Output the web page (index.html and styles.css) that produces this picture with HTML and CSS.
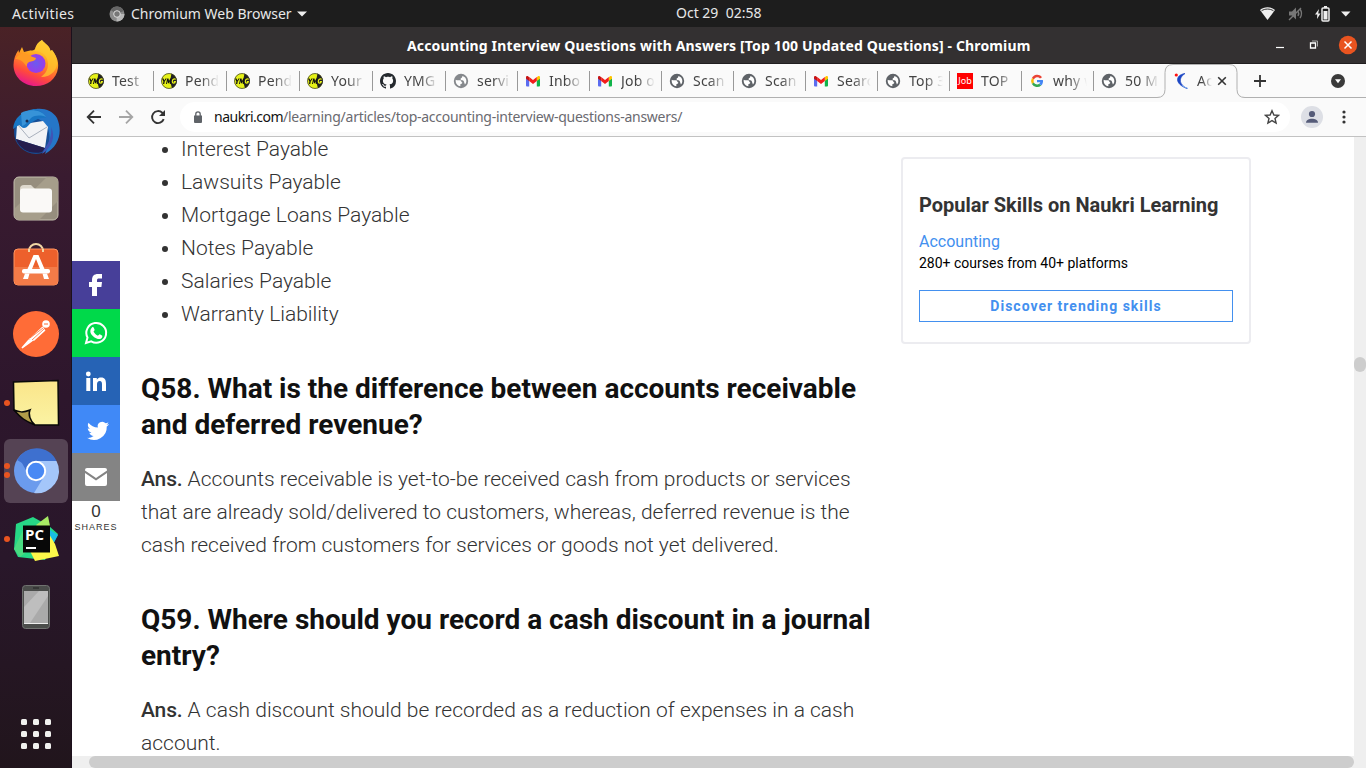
FILE: index.html
```html
<!DOCTYPE html>
<html lang="en">
<head>
<meta charset="utf-8">
<title>Accounting Interview Questions with Answers</title>
<link rel="stylesheet" href="styles.css">
</head>
<body>
<svg width="0" height="0" class="defs">
  <symbol id="ymg" viewBox="0 0 16 16"><circle cx="8" cy="8" r="7.8" fill="#e6f218"/><path d="M10.5.6A7.8 7.8 0 0 1 15 11.500A8 8 0 0 1 11 15.200L9 8z" fill="#222"/><circle cx="8" cy="8" r="7.500" fill="none" stroke="#333" stroke-width=".7"/><path d="M1 5.500h1.500l.8 2 1.200-2h1.300L3.700 8.500 3.300 11H2l.4-2.500zM6.200 5.500h1.300l.5 2.500 1.300-2.500h1.200L9.800 11H8.700l.4-3L8 10.300H7l-.5-2.500L6 11H5z" fill="#111"/><path d="M14.500 6.600c-.5-1.100-3.200-.9-3.200 1.800 0 2.400 2.700 2.200 3 .3h-1.500" fill="none" stroke="#e6f218" stroke-width="1.200"/></symbol>
  <symbol id="globe" viewBox="0 0 24 24"><circle cx="12" cy="12" r="9.500" fill="#fff"/><path fill="#5f6368" d="M12 1.200a10.800 10.800 0 1 0 0 21.600 10.800 10.800 0 0 0 0-21.600zM11 19.930c-3.950-.49-7-3.850-7-7.930 0-.62.08-1.210.21-1.790l1.500.8h4.500c1.500 0 2 1 2.300 2 .2.800 1.500.5 1.500 1.500 0 1.500-2 1.500-3 2.200zm6.900-2.540-1.900-5.390c-.7-1.500-3-.5-4-1.500-1-1.200-.5-2.500.5-3 1-.4 1.500-1.200 1.500-2.910 4 .7 6 4.060 6 7.410 0 2.080-.8 3.970-2.100 5.390z"/></symbol>
  <symbol id="gmail" viewBox="0 0 16 16"><path d="M1 5v7.500a1 1 0 0 0 1 1h2.200V7z" fill="#5b6cf0"/><path d="M15 5v7.500a1 1 0 0 1-1 1h-2.200V7z" fill="#10b34a"/><path d="M11.800 4.200 13 3.200c.8-.6 2-.1 2 1v1.500l-3.200 2.400z" fill="#ffc400"/><path d="M4.200 8.100V4L8 6.900 11.800 4v4.100L8 11z" fill="#f31c1c"/><path d="M1 5.700V4.200c0-1.100 1.200-1.600 2-1l1.200 1v3.900z" fill="#c61414"/></symbol>
  <symbol id="github" viewBox="0 0 16 16"><path fill="#24292e" d="M8 0C3.580 0 0 3.580 0 8c0 3.540 2.290 6.530 5.470 7.590.4.070.55-.17.55-.38 0-.19-.01-.82-.01-1.490-2.010.37-2.530-.49-2.690-.94-.09-.23-.48-.94-.82-1.130-.28-.15-.68-.52-.01-.53.63-.01 1.080.58 1.230.82.72 1.210 1.870.87 2.330.66.070-.52.28-.87.51-1.070-1.780-.2-3.640-.89-3.640-3.950 0-.87.31-1.590.82-2.150-.08-.2-.36-1.020.08-2.120 0 0 .67-.21 2.200.82.640-.18 1.320-.27 2-.27s1.360.09 2 .27c1.530-1.040 2.200-.82 2.200-.82.44 1.100.16 1.920.08 2.120.51.56.82 1.270.82 2.150 0 3.070-1.870 3.750-3.650 3.950.29.25.54.73.54 1.480 0 1.070-.01 1.930-.01 2.200 0 .21.15.46.55.38A8.010 8.010 0 0 0 16 8c0-4.420-3.580-8-8-8z"/></symbol>
  <symbol id="google" viewBox="0 0 16 16"><path d="M13 4.200A6 6 0 0 0 2.900 5.100L4.900 6.500A3.600 3.600 0 0 1 11 5.500z" fill="#ea4335"/><path d="M2.900 5.100a6 6 0 0 0 0 5.800l2-1.500a3.600 3.600 0 0 1 0-2.900z" fill="#fbbc05"/><path d="M2.900 10.900a6 6 0 0 0 9.300 1.500l-2-1.600a3.600 3.600 0 0 1-5.300-1.400z" fill="#34a853"/><path d="M8 6.900h5.900c.4 2.200-.2 4.200-1.700 5.500l-2-1.600c.6-.4 1-1 1.100-1.600H8z" fill="#4285f4"/></symbol>
</svg>

<header class="topbar">
  <span class="activities">Activities</span>
  <svg class="app-icon" width="16" height="16" viewBox="0 0 16 16"><circle cx="8" cy="8" r="7.500" fill="#8b8b8b"/><path d="M8 8 1.600 4A7.500 7.500 0 0 1 14.800 5z" fill="#666"/><path d="M8 8h7.500A7.500 7.500 0 0 1 7.500 15.500z" fill="#b8b8b8"/><circle cx="8" cy="8" r="3.300" fill="#777" stroke="#ddd" stroke-width="1"/></svg>
  <span class="app-name">Chromium Web Browser</span>
  <svg class="app-arrow" width="10" height="6" viewBox="0 0 10 6"><path d="M0 .5h10L5 5.500z" fill="#eee"/></svg>
  <span class="clock">Oct 29&nbsp; 02:58</span>
  <svg class="status" width="92" height="18" viewBox="0 0 92 18">
    <path d="M1 5C5 1.300 12 1.300 16 5L8.500 15z" fill="#eee"/><path d="M2.500 5.800C6 3.500 11 3.500 14.500 5.800" stroke="#1d1d1d" fill="none" stroke-width=".9"/>
    <g stroke="#777" fill="none" stroke-width="1.400"><path d="M30 6.500h3l4-4v12l-4-4h-3z" fill="#777" stroke="none"/><path d="M39 6q1.500 2.500 0 5M41 4q3 4.500 0 9M30 15 42 3"/></g>
    <path d="M60 4l-4 5.500h2.300L58 14l3.500-5.500h-2.300z" fill="#eee"/><rect x="63" y="3" width="7" height="13" rx="1" fill="none" stroke="#eee" stroke-width="1.500"/><path d="M65 1h3v2h-3zM64.500 6h4v8.500h-4z" fill="#eee"/>
    <path d="M82 6.500h9.500l-4.750 5z" fill="#eee"/>
  </svg>
</header>

<div class="desktop">
  <nav class="dock">
    <div class="app"><svg width="48" height="48" viewBox="0 0 48 48">
      <defs><linearGradient id="ff" x1=".75" y1="0" x2=".35" y2="1"><stop offset="0" stop-color="#fff04a"/><stop offset=".4" stop-color="#ffa31f"/><stop offset=".75" stop-color="#ff4a3c"/><stop offset="1" stop-color="#e6168f"/></linearGradient><radialGradient id="fp"><stop offset="0" stop-color="#6a5bef"/><stop offset="1" stop-color="#9b3be8"/></radialGradient></defs>
      <path d="M30 1c2 3 8 6 8.500 11l1.500-1c4 5 7 11 6 18-1.500 11-10.500 18-22 18C10.500 47 1.500 37 1.500 26c0-6 2-11 5-15l.5 3 3-6 2 5 4-1c3-1 6 0 7-2 1-4 3-7 7-9z" fill="url(#ff)"/>
      <path d="M30 1c-4 3-7 7-7 11 8 0 13 6 13 13 0 6-3 10-7 13 11 0 17-8 16-16-1-4-2-8-5-11l-1.500 1C38 7 32 4 30 1z" fill="#ffc52e" opacity=".75"/><circle cx="24" cy="24.500" r="9.500" fill="url(#fp)"/><path d="M3 20c5-6 8-7 14-4 3 2 5 2 7 3 0 2-2 3-5 3.500-3 .5-4 2-4.500 5C11 22 8 20 3 20z" fill="#ff9a24"/></svg></div>
    <div class="app"><svg width="48" height="48" viewBox="0 0 48 48"><circle cx="24" cy="25" r="22" fill="#174f96"/><path d="M12 9C19-1 38-1 45 11c6 14 2 28-12 36 4-9 6-17 3-25-4-9-12-13-24-13z" fill="#2576c8"/><path d="M5 18l26-4 5 6-3 21L4 32z" fill="#f2f3f5"/><path d="m6 18 11 13 18-11" fill="none" stroke="#aab1bd"/><path d="M1 22C2 11 10 4 22 2c6 1 10 4 12 9-4-1-8 0-12 3-5 2-6 7-10 7-2 0-3-2-5-3z" fill="#1876c4"/><path d="M9 6C16 2 29 2 34 10c-5-2-11-2-15 1-3 3-5 7-9 8z" fill="#3793d8"/><circle cx="15" cy="14" r="1.500" fill="#182c52"/><path d="M33 41c5-7 7-14 6-21 5 10 1 20-9 27z" fill="#4054b5"/><path d="M4 32l29 9-3 4C19 48 8 43 4 32z" fill="#251d4d"/></svg></div>
    <div class="app raised"><svg width="48" height="48" viewBox="0 0 48 48"><rect x="2" y="3" width="44" height="43" rx="5" fill="#968e7e" stroke="#c4bfae"/><path d="M3 34 35 3h7q4 0 4 4v20L27 46H8q-5 0-5-5z" fill="#a69e8b"/><path d="M8 15q0-4 4-4h7l4 4v5H8z" fill="#ddd8cd"/><rect x="8" y="14.500" width="32" height="24" rx="3" fill="#faf9f7"/></svg></div>
    <div class="app raised"><svg width="48" height="48" viewBox="0 0 48 48"><path d="M17 9a7 7 0 0 1 14 0" fill="none" stroke="#f2d7a5" stroke-width="2"/><rect x="2" y="7" width="44" height="36" rx="4" fill="#ed602c" stroke="#ff9560"/><path d="M2.500 25h43v14q0 4-4 4H7q-4 0-4-4z" fill="#f37b48"/><path d="M17 10V7M31 10V7" stroke="#f2d7a5" stroke-width="2"/><path d="m15.500 27 6-14h5l6 14h-4.500L24 17l-4 10zM13 31.500h4.500L16 37h-5zM30.500 31.500H35l2 5.500h-5z" fill="#fff"/><rect x="10" y="27" width="28" height="4.500" rx="2" fill="#fff"/></svg></div>
    <div class="app raised"><svg width="48" height="48" viewBox="0 0 48 48"><circle cx="24" cy="24" r="23" fill="#ff6c37"/><circle cx="34" cy="14" r="3.800" fill="#fff"/><path d="M31 17 18 29l4 1 11-10M17 30 10 38l7-5 4-3" fill="#fff" stroke="#fff" stroke-width="1.500"/><path d="m18 28 13-10M20 30l12-11" stroke="#ff6c37" stroke-width=".8"/><path d="M32 14h4" stroke="#ff6c37"/></svg></div>
    <div class="app"><i class="dot"></i><svg width="48" height="48" viewBox="0 0 48 48"><defs><linearGradient id="note" x2="0" y2="1"><stop stop-color="#fae58a"/><stop offset="1" stop-color="#fbf3a3"/></linearGradient></defs><path d="M1.500 3 46 1.500 46.500 46H23L2 31z" fill="url(#note)" stroke="#080808" stroke-width="1.500"/><path d="M2 31c5 2 9 3 16 0-2 4 0 11 5 15C13 42 9 39 2 31z" fill="#b09b49" stroke="#080808" stroke-width="1.500"/></svg></div>
    <div class="app active"><i class="dot pair"></i><svg width="48" height="48" viewBox="0 0 48 48"><circle cx="24" cy="24" r="22" fill="#6b9bed"/><path d="M24 24 5 13A22 22 0 0 1 44.500 14H24z" fill="#3e70cf"/><path d="M24 14h20.500A22 22 0 0 1 22 46L33 28z" fill="#a4c6fa"/><path d="M7 11 18 30 24 14z" fill="#3e70cf"/><circle cx="24" cy="24" r="9.200" fill="#4989f4" stroke="#fff" stroke-width="2"/></svg></div>
    <div class="app"><i class="dot"></i><svg width="48" height="48" viewBox="0 0 48 48"><path d="M4 9 21 2l16 9 9 8-13 26L6 42 2 34z" fill="#26d886"/><path d="m24 10 12-9 2 10-4 12z" fill="#a7eb64"/><path d="m35 13 11 7-10 19z" fill="#18bde5"/><path d="m17 34 20-15 6 10 4 12-24 5z" fill="#fcf84a"/><path d="M2 34 12 13l5 22-9 7z" fill="#49db81"/><rect x="11" y="10.500" width="27" height="27" fill="#080808"/><text x="13" y="25" class="pc">PC</text><path d="M14 32h10v2H14z" fill="#fff"/></svg></div>
    <div class="app"><svg width="48" height="48" viewBox="0 0 48 48"><rect x="10.500" y="2.500" width="27" height="43" rx="3" fill="#4b4d4b" stroke="#707270"/><path d="M12 8h24v32.500H12z" fill="#aaa"/><path d="M12 24 27 8h9v5L18 40h-6z" fill="#bebebe"/><path d="M21 5h6" stroke="#222"/><path d="M12 40.500h24" stroke="#eee"/></svg></div>
    <svg class="grid" width="30" height="30" viewBox="0 0 30 30" fill="#f1f1ef"><rect width="6" height="6" rx="1.500"/><rect x="12" width="6" height="6" rx="1.500"/><rect x="24" width="6" height="6" rx="1.500"/><rect y="12" width="6" height="6" rx="1.500"/><rect x="12" y="12" width="6" height="6" rx="1.500"/><rect x="24" y="12" width="6" height="6" rx="1.500"/><rect y="24" width="6" height="6" rx="1.500"/><rect x="12" y="24" width="6" height="6" rx="1.500"/><rect x="24" y="24" width="6" height="6" rx="1.500"/></svg>
  </nav>

  <section class="window">
    <div class="titlebar"><span class="title">Accounting Interview Questions with Answers [Top 100 Updated Questions] - Chromium</span>
      <svg class="winctl" width="84" height="20" viewBox="0 0 84 20"><path d="M2 12.500h8" stroke="#fff" stroke-width="1.200"/><path d="M36.500 8h5v5h-5z" fill="none" stroke="#fff" stroke-width="1.300"/><path d="M38 6h5.500v5.500" fill="none" stroke="#aaa"/><circle cx="74" cy="10" r="9.200" fill="#e95420"/><path d="m70.500 6.500 7 7m0-7-7 7" stroke="#fff" stroke-width="1.500"/></svg>
    </div>
    <div class="tabs">
      <div class="tab first"><svg><use href="#ymg"/></svg><span>Test</span></div>
      <div class="tab wide"><svg><use href="#ymg"/></svg><span>Pend</span></div>
      <div class="tab wide"><svg><use href="#ymg"/></svg><span>Pend</span></div>
      <div class="tab wide"><svg><use href="#ymg"/></svg><span>Your</span></div>
      <div class="tab wide"><svg><use href="#github"/></svg><span>YMG</span></div>
      <div class="tab"><svg class="faded"><use href="#globe"/></svg><span>servi</span></div>
      <div class="tab"><svg><use href="#gmail"/></svg><span>Inbo</span></div>
      <div class="tab"><svg><use href="#gmail"/></svg><span>Job o</span></div>
      <div class="tab"><svg><use href="#globe"/></svg><span>Scan</span></div>
      <div class="tab"><svg><use href="#globe"/></svg><span>Scan</span></div>
      <div class="tab"><svg><use href="#gmail"/></svg><span>Sear<i>c</i></span></div>
      <div class="tab"><svg><use href="#globe"/></svg><span>Top 3</span></div>
      <div class="tab"><b class="job">Job</b><span>TOP</span></div>
      <div class="tab"><svg><use href="#google"/></svg><span>why w</span></div>
      <div class="tab last"><svg><use href="#globe"/></svg><span>50 M</span></div>
      <div class="tab current">
        <svg class="outline" viewBox="0 0 88 34"><path d="M0 33.500q8 0 8-8V8.500q0-8 8-8h56q8 0 8 8v17q0 8 8 8V34H0z" fill="#fafafa"/><path d="M0 33.500q8 0 8-8V8.500q0-8 8-8h56q8 0 8 8v17q0 8 8 8" fill="none" stroke="#b0b0b0"/></svg>
        <svg class="fav" viewBox="0 0 16 16"><path d="M11 .5C1 2 .5 11 13 15.500 5 11.500 4 5 11 .5z" fill="#1c47c4" stroke="#1c47c4" stroke-width=".7"/><path d="M8 12.500q3 2 6 3" stroke="#79a9ef" fill="none"/><circle cx="2.300" cy="2" r="1.600" fill="#f11"/></svg>
        <span>Ac</span><svg class="close" viewBox="0 0 10 10"><path d="m1.200 1.200 7.600 7.600m0-7.600-7.600 7.600" stroke="#333" stroke-width="1.600"/></svg></div>
      <svg class="plus" viewBox="0 0 12 12"><path d="M6 0v12M0 6h12" stroke="#333" stroke-width="1.800"/></svg>
      <svg class="tablist" viewBox="0 0 14 14"><circle cx="7" cy="7" r="7" fill="#3a3a3a"/><path d="M4 5.300h6L7 9.300z" fill="#fff"/></svg>
    </div>
    <div class="toolbar">
      <svg class="nav" viewBox="0 0 16 16"><path d="M15 8H2M8 1.700 1.700 8 8 14.300" fill="none" stroke="#333" stroke-width="1.800"/></svg>
      <svg class="nav" viewBox="0 0 16 16"><path d="M1 8h13M8 1.700 14.300 8 8 14.300" fill="none" stroke="#a5a5a5" stroke-width="1.800"/></svg>
      <svg class="nav" viewBox="0 0 16 16"><path d="M13.700 10.200A6 6 0 1 1 12.300 3.800L14 5.500" fill="none" stroke="#333" stroke-width="1.900"/><path d="M15 1v6H9z" fill="#333"/></svg>
      <div class="address"><svg width="8" height="12" viewBox="0 0 8 12"><path d="M0 4.500h8V11q0 1-1 1H1q-1 0-1-1z" fill="#5f6368"/><path d="M1.800 5V3a2.200 2.200 0 0 1 4.400 0v2" fill="none" stroke="#5f6368" stroke-width="1.300"/></svg><span class="url"><b>naukri.com</b>/learning/articles/top-accounting-interview-questions-answers/</span><svg class="star" width="16" height="16" viewBox="0 0 16 16"><path d="m8 1.700 1.900 4.300 4.600.4-3.500 3 1.100 4.600L8 11.600 3.900 14 5 9.400l-3.500-3 4.600-.4z" fill="none" stroke="#444" stroke-width="1.400"/></svg></div>
      <svg class="avatar" viewBox="0 0 22 22"><circle cx="11" cy="11" r="11" fill="#dddfe5"/><circle cx="11" cy="8" r="3.100" fill="#555b78"/><path d="M5 16.700c0-5.200 12-5.200 12 0z" fill="#555b78"/></svg>
      <svg class="menu" viewBox="0 0 4 14" fill="#333"><circle cx="2" cy="2" r="1.600"/><circle cx="2" cy="7" r="1.600"/><circle cx="2" cy="12" r="1.600"/></svg>
    </div>

    <div class="view">
      <div class="page">
        <aside class="share">
          <a class="fb"><svg viewBox="0 0 48 48"><path d="M20 35v-9h-3v-5h3v-2c0-4 2-6 6-6h4v4.500h-3c-1.500 0-2 .6-2 2V21h5l-.6 5H25v9z" fill="#fff"/></svg></a>
          <a class="wa"><svg viewBox="0 0 48 48"><path d="m14 34 1.500-5.500a9.900 9.900 0 1 1 3.700 3.900z" fill="none" stroke="#fff" stroke-width="2"/><path d="M20 18.500c.7-.7 1.500-.5 1.800.2l.8 2c.2.500-.9 1.500-1.100 1.800 1 2 2.400 3.300 4.500 4.200.4-.2 1.200-1.500 1.700-1.400l2.300 1.200c.5.200.4 1.200 0 2-1 1.600-3 2-5.400 1-3.500-1.400-5.800-4.300-6.200-6.300-.3-1.900.5-3.600 1.600-4.700z" fill="#fff"/></svg></a>
          <a class="li"><svg viewBox="0 0 48 48" fill="#fff"><circle cx="16.300" cy="17" r="2.400"/><path d="M14.300 20.900h4V34h-4zM21 20.900h3.800v1.800c1-1.600 2.500-2.200 4.300-2.200 3.800 0 4.900 2.300 4.900 6.400V34h-4v-6.500c0-2.100-.4-3.400-2.200-3.400-2 0-2.800 1.300-2.800 3.400V34h-4z"/></svg></a>
          <a class="tw"><svg viewBox="0 1 46 46"><path d="M35.500 19.200c-.8.400-1.600.6-2.500.7.900-.5 1.600-1.300 1.900-2.300-.8.500-1.700.8-2.700 1a4.300 4.300 0 0 0-7.400 4A12.300 12.300 0 0 1 15.800 18c-1.200 2-.6 4.600 1.300 5.800-.7 0-1.400-.2-2-.5 0 2.100 1.500 3.800 3.500 4.300-.6.200-1.300.2-2 .1.600 1.700 2.200 3 4.100 3a8.700 8.700 0 0 1-6.400 1.800 12.300 12.300 0 0 0 19-10.900c.9-.6 1.600-1.400 2.200-2.400z" fill="#fff"/></svg></a>
          <a class="ml"><svg viewBox="0 0 48 48"><path d="M15 15h18q2 0 2 2v.5L24 25l-11-7.500V17q0-2 2-2zm-2 5 11 7.500L35 20v11q0 2-2 2H15q-2 0-2-2z" fill="#fff"/></svg></a>
          <span class="count">0</span><span class="label">SHARES</span>
        </aside>
        <article>
          <ul><li>Interest Payable</li><li>Lawsuits Payable</li><li>Mortgage Loans Payable</li><li>Notes Payable</li><li>Salaries Payable</li><li>Warranty Liability</li></ul>
          <h2>Q58. What is the difference between accounts receivable<br>and deferred revenue?</h2>
          <p><b>Ans.</b> Accounts receivable is yet-to-be received cash from products or services<br>that are already sold/delivered to customers, whereas, deferred revenue is the<br>cash received from customers for services or goods not yet delivered.</p>
          <h2>Q59. Where should you record a cash discount in a journal<br>entry?</h2>
          <p><b>Ans.</b> A cash discount should be recorded as a reduction of expenses in a cash<br>account.</p>
        </article>
        <aside class="skills">
          <h3>Popular Skills on Naukri Learning</h3>
          <a class="topic">Accounting</a>
          <span class="courses">280+ courses from 40+ platforms</span>
          <a class="discover">Discover trending skills</a>
        </aside>
      </div>
      <div class="vscroll"><i></i></div>
      <div class="hscroll"><i></i></div>
    </div>
  </section>
</div>
</body>
</html>
```
FILE: styles.css
```css
* { box-sizing: border-box; }
body { margin: 0; width: 1366px; height: 768px; overflow: hidden; font-family: "Noto Sans", sans-serif; background: #fff; }
svg { display: block; flex: none; }
.defs { position: absolute; }

.topbar { height: 27px; background: #1d1d1d; color: #e8e8e8; font-size: 14px; line-height: 27px; display: flex; align-items: center; white-space: nowrap; }
.activities { width: 97px; padding-left: 12px; letter-spacing: .4px; }
.app-icon { margin: 0 6px 0 12px; }
.app-name { width: 161px; }
.app-arrow { margin-left: 5px; }
.clock { margin-left: 369px; width: 88px; font-size: 14px; line-height: 25px; height: 27px; }
.status { margin-left: auto; margin-right: 15px; }

.desktop { display: flex; height: 741px; }
.dock { width: 72px; background: linear-gradient(#4a2226, #391b30 20%, #2d162c 50%, #29172a 72%, #21151c); border-right: 1px solid #1c101c; display: flex; flex-direction: column; align-items: center; gap: 4px; padding-top: 4px; }
.app { width: 64px; height: 64px; border-radius: 6px; display: flex; align-items: center; justify-content: center; position: relative; flex: none; }
.app.raised { padding-bottom: 2px; }
.app.active { background: #554354; }
.dot { position: absolute; left: 0; top: 29px; width: 6px; height: 6px; border-radius: 50%; background: #e95420; }
.dot.pair { top: 24px; box-shadow: 0 9px #e95420; }
.pc { font: bold 15px "Open Sans", sans-serif; fill: #fff; }
.grid { margin-top: auto; margin-bottom: 19px; }

.window { width: 1294px; display: flex; flex-direction: column; }
.titlebar { height: 37px; background: #333031; border-bottom: 1px solid #201e1f; color: #fff; display: flex; align-items: center; }
.title { margin-left: 335px; font-size: 14px; font-weight: 700; white-space: nowrap; width: 640px; letter-spacing: .15px; }
.winctl { margin-left: auto; margin-right: 8px; }

.tabs { height: 34px; background: #fafafa; border-bottom: 1px solid #b0b0b0; display: flex; align-items: center; color: #444; font-size: 14px; }
.tab { width: 72px; height: 20px; padding-left: 7px; border-right: 1px solid #999; display: flex; align-items: center; flex: none; }
.tab.first { width: 82px; padding-left: 16px; }
.tab.wide { width: 73px; }
.tab.last { border: 0; width: 71px; }
.tab > svg { width: 16px; height: 16px; }
.tab > span { margin-left: 8px; width: 40px; margin-right: -8px; line-height: 20px; white-space: nowrap; letter-spacing: .2px; -webkit-mask-image: linear-gradient(90deg, #000 16px, transparent 34px); mask-image: linear-gradient(90deg, #000 16px, transparent 34px); }
.tab i { font-style: normal; }
.faded { opacity: .75; }
.job { width: 16px; height: 16px; background: #f00; color: #fff; font: 9px/16px "Noto Sans", sans-serif; text-align: center; }
.tab.current { position: relative; border: 0; height: 33px; padding-left: 9px; }
.tab.current .outline { position: absolute; left: -8px; top: 0; width: 88px; height: 34px; }
.tab.current .fav, .tab.current span, .tab.current .close { position: relative; }
.tab.current span { width: 20px; margin-left: 7px; margin-right: -6px; -webkit-mask-image: linear-gradient(90deg, #000 5px, transparent 15px); mask-image: linear-gradient(90deg, #000 5px, transparent 15px); }
.tab.current .close { width: 10px; height: 10px; margin-left: 6px; }
.plus { width: 12px; height: 12px; margin-left: 17px; }
.tablist { width: 14px; height: 14px; margin-left: auto; margin-right: 21px; }

.toolbar { height: 39px; background: #fafafa; border-bottom: 1px solid #c2c2c2; display: flex; align-items: center; padding-left: 14px; }
.nav { width: 16px; height: 16px; margin-right: 16px; }
.address { margin-left: -2px; height: 30px; width: 1110px; background: #fff; border-radius: 15px; display: flex; align-items: center; padding: 0 10px 0 14px; }
.url { margin-left: 12px; padding-bottom: 2px; font-size: 14px; color: #6a6a70; white-space: nowrap; letter-spacing: -.26px; }
.url b { font-weight: 400; color: #111; letter-spacing: -.5px; }
.star { margin-left: auto; }
.avatar { width: 22px; height: 22px; margin-left: 11px; }
.menu { width: 4px; height: 14px; margin-left: 19px; }

.view { flex: 1; display: grid; grid-template: 619px 12px / 1282px 12px; background: #efefef; }
.page { background: #fff; display: flex; align-items: flex-start; overflow: hidden; font-family: Roboto, sans-serif; }
.share { width: 48px; margin-top: 124px; display: flex; flex-direction: column; align-items: center; font-family: "Liberation Sans", sans-serif; color: #333; }
.share a, .share a svg { display: block; width: 48px; height: 48px; }
.fb { background: #473f99; }
.wa { background: #00d94a; }
.li { background: #2663b5; }
.tw { background: #4089f7; }
.ml { background: #848484; }
.count { font-size: 17px; line-height: 20px; padding-top: 1px; }
.label { font-size: 9px; line-height: 10px; letter-spacing: 1px; }
article { margin-left: 21px; width: 740px; font-weight: 300; font-size: 21px; line-height: 33px; color: #333; white-space: nowrap; }
ul { margin: -4px 0 0; padding-left: 40px; }
h2 { margin: 40px 0 20px; font-size: 28px; line-height: 36px; font-weight: 700; color: #111; }
p { margin: 0; }
p b { font-weight: 500; letter-spacing: -.15px; }
.skills { margin: 20px 0 0 20px; width: 350px; height: 187px; border: 2px solid #ececf0; border-radius: 4px; padding: 33px 16px 0; color: #000; display: flex; flex-direction: column; }
h3 { margin: 0; font-size: 20px; line-height: 26px; font-weight: 700; color: #333; white-space: nowrap; }
.topic { margin-top: 13px; font-size: 16px; line-height: 22px; color: #4390ef; }
.courses { font-size: 14px; line-height: 20px; }
.discover { margin-top: 17px; height: 32px; border: 1px solid #4390ef; color: #4390ef; font-size: 14px; line-height: 30px; font-weight: 700; letter-spacing: 1px; text-align: center; }
.vscroll i { display: block; width: 12px; height: 15px; margin-top: 220px; border-radius: 6px; background: #cdcdcd; }
.hscroll i { display: block; width: 1265px; height: 12px; margin-left: 17px; border-radius: 6px; background: #cdcdcd; }
```
